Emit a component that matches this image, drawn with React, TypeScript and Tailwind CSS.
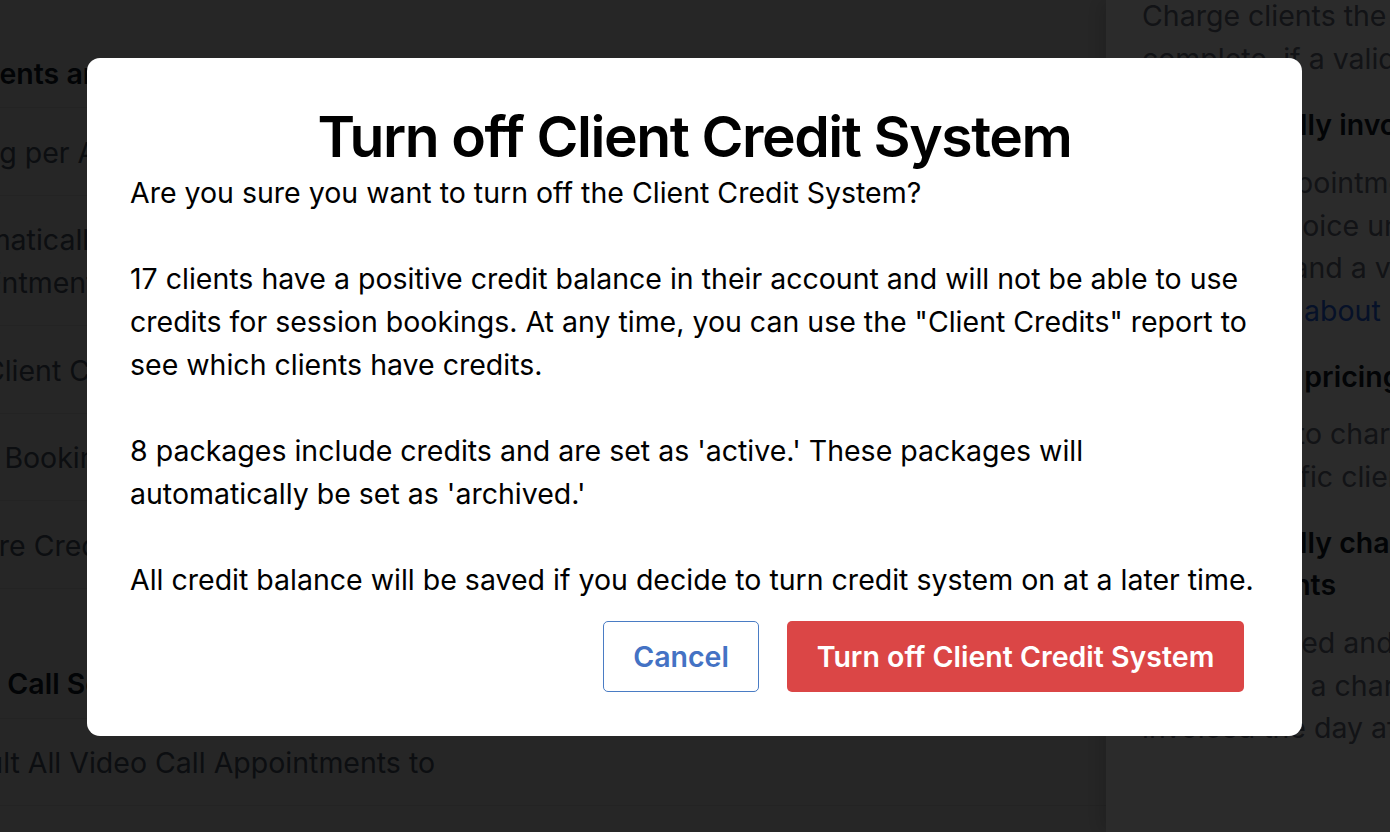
import React from 'react';

const inter = { fontFamily: 'Inter, "Noto Sans", sans-serif' };

const rows: string[][] = [
  ['Pricing per Appointment'],
  ['Automatically Charge Completed', 'Appointments'],
  ['Use Client Credit System'],
  ['Allow Booking with Credits'],
  ['Require Credits for Booking'],
];

export default function App() {
  return (
    <div className="relative h-[832px] w-full overflow-hidden bg-[#e0e0e0] text-[28.5px] leading-[43px]" style={inter}>
      {/* page behind the dialog */}
      <div className="flex h-full">
        <main className="-ml-[77px] w-[1183px] shrink-0 pt-[52px] text-[#4b5563]">
          <div className="whitespace-nowrap border-b border-[#cfcfcf] pb-[12px] font-semibold text-[#111827]">
            Payments and Invoices
          </div>
          {rows.map((lines, i) => (
            <div key={i} className="whitespace-nowrap border-b border-[#cfcfcf] pt-[22.5px] pb-[21px]">
              {lines.map((l) => (
                <div key={l}>{l}</div>
              ))}
            </div>
          ))}
          <div className="-indent-[3px] whitespace-nowrap border-b border-[#cfcfcf] pt-[73px] pb-[13px] font-semibold text-[#111827]">
            Video Call Settings
          </div>
          <div className="whitespace-nowrap border-b border-[#cfcfcf] pt-[22.5px] pb-[21px]">
            Default All Video Call Appointments to
          </div>
        </main>

        <aside className="relative w-[284px] shrink-0 overflow-hidden whitespace-nowrap bg-white pl-[36px] leading-[42.67px] text-[#6b7280] shadow-[-6px_0_16px_rgba(0,0,0,0.14)]">
          <div className="-mt-[5px]">
            <div>Charge clients the full amount when appointments are</div>
            <div>complete, if a valid card is on file.</div>
          </div>
          <div className="mt-[24px] font-semibold text-[#111827]">Automatically invoice</div>
          <div className="mt-[15px]">
            <div>Once an appointment is</div>
            <div>make an invoice unless the</div>
            <div>completed and a valid card</div>
            <div className="text-[#2563eb]">Learn more about invoicing</div>
          </div>
          <div className="mt-[23px] font-semibold text-[#111827]">Set custom pricing</div>
          <div className="mt-[15px]">
            <div>Allows you to charge</div>
            <div>fee to specific clients.</div>
          </div>
          <div className="mt-[23px] font-semibold text-[#111827]">
            <div>Automatically charge</div>
            <div>Appointments</div>
          </div>
          <div className="mt-[15px]">
            <div>are completed and</div>
            <div>then there's a charge</div>
            <div>invoiced the day after the appointment.</div>
          </div>
        </aside>
      </div>

      {/* overlay */}
      <div className="absolute inset-0 bg-black/[0.83]" />

      {/* dialog */}
      <div className="absolute inset-0 pt-[58px] pl-[87px]">
        <div className="h-[678px] w-[1215px] rounded-[13px] bg-white px-[43px] pt-[45px] text-black">
          <h1 className="text-center text-[57px] font-semibold leading-[1.2] tracking-tight">
            Turn off Client Credit System
          </h1>
          <p>
            Are you sure you want to turn off the Client Credit System?
            <br />
            <br />
            17 clients have a positive credit balance in their account and will not be able to use
            <br />
            credits for session bookings. At any time, you can use the "Client Credits" report to
            <br />
            see which clients have credits.
            <br />
            <br />
            8 packages include credits and are set as 'active.' These packages will
            <br />
            automatically be set as 'archived.'
            <br />
            <br />
            All credit balance will be saved if you decide to turn credit system on at a later time.
          </p>
          <div className="mt-[20px] mr-[15px] flex justify-end gap-[28px]">
            <button className="h-[71px] w-[156px] rounded-[5px] border border-[#4a7cc4] bg-white font-semibold text-[#4472c4]">
              Cancel
            </button>
            <button className="h-[71px] w-[457px] rounded-[5px] bg-[#db4646] font-semibold text-white">
              Turn off Client Credit System
            </button>
          </div>
        </div>
      </div>
    </div>
  );
}
